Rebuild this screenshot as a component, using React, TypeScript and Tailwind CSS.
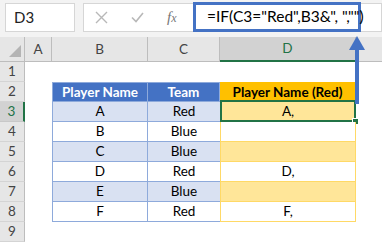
import React from "react";

const FONT = { fontFamily: "Lato, 'Liberation Sans', sans-serif" };

interface Row {
  n: number;
  player: string;
  team: string;
  red: string;
}

const rows: Row[] = [
  { n: 3, player: "A", team: "Red", red: "A," },
  { n: 4, player: "B", team: "Blue", red: "" },
  { n: 5, player: "C", team: "Blue", red: "" },
  { n: 6, player: "D", team: "Red", red: "D," },
  { n: 7, player: "E", team: "Blue", red: "" },
  { n: 8, player: "F", team: "Red", red: "F," },
];

function RowHead({ n, active }: { n: number; active?: boolean }) {
  return (
    <div
      className={
        active
          ? "flex items-center justify-center bg-[#d2d2d2] border-b border-[#c8c8c8] border-r-2 border-r-[#217346] text-[13.5px] text-[#217346]"
          : "flex items-center justify-center bg-[#e6e6e6] border-b border-[#d4d4d4] border-r border-r-[#bdbdbd] text-[13.5px] text-[#444]"
      }
    >
      {n}
    </div>
  );
}

export default function App() {
  return (
    <div className="relative w-[382px] h-[242px] overflow-hidden bg-white text-black" style={FONT}>
      {/* formula bar */}
      <div className="flex items-start h-[37px] bg-[#f3f3f3] pt-[3px] pl-[5px]">
        <div className="w-[70px] h-[29px] bg-white border border-[#d6d6d6] flex items-center pl-[8px] text-[15px] text-[#222]">
          D3
        </div>
        <div className="ml-[8px] flex-1 h-[29px] bg-white border border-[#d6d6d6] flex items-center">
          <div className="w-[109px] flex items-center pl-[11px] gap-[23px]">
            <svg width="13" height="13" viewBox="0 0 13 13">
              <path d="M1 1 L12 12 M12 1 L1 12" stroke="#b8b8b8" strokeWidth="1.4" fill="none" />
            </svg>
            <svg width="13" height="11" viewBox="0 0 13 11">
              <path d="M1 5.5 L5 9.5 L12 1" stroke="#b8b8b8" strokeWidth="1.6" fill="none" />
            </svg>
            <span className="italic text-[15px] text-[#777]" style={{ fontFamily: "'Liberation Serif', serif" }}>
              f<span className="text-[12px]">x</span>
            </span>
          </div>
          <div className="-mt-[1px] h-[30px] w-[168px] border-[3px] border-[#4472c4] flex items-center pl-[11px] text-[15.5px] text-black whitespace-nowrap">
            =IF(C3="Red",B3&amp;", ","")
          </div>
        </div>
      </div>

      {/* grid */}
      <div className="grid grid-cols-[25px_27px_96px_72px_136px_26px] grid-rows-[25px_repeat(9,20px)]">
        {/* column headers */}
        <div className="relative bg-[#e6e6e6] border-r border-b border-[#bdbdbd]">
          <div className="absolute right-[3px] bottom-[4px] w-0 h-0 border-l-[12px] border-l-transparent border-b-[12px] border-b-[#b4b4b4]" />
        </div>
        <div className="flex items-center justify-center bg-[#e6e6e6] border-r border-b border-[#bdbdbd] text-[13.5px] text-[#444]">A</div>
        <div className="flex items-center justify-center bg-[#e6e6e6] border-r border-b border-[#bdbdbd] text-[13.5px] text-[#444]">B</div>
        <div className="flex items-center justify-center bg-[#e6e6e6] border-r border-b border-[#bdbdbd] text-[13.5px] text-[#444]">C</div>
        <div className="flex items-center justify-center bg-[#d2d2d2] border-r border-[#bdbdbd] border-b-2 border-b-[#217346] text-[13.5px] text-[#217346]">D</div>
        <div className="bg-[#e6e6e6] border-b border-[#bdbdbd]" />

        {/* row 1 */}
        <RowHead n={1} />
        <div className="col-span-5" />

        {/* row 2 - table header */}
        <RowHead n={2} />
        <div />
        <div className="flex items-center justify-center bg-[#4472c4] border border-[#8eaadb] text-white font-bold text-[13.5px]">Player Name</div>
        <div className="flex items-center justify-center bg-[#4472c4] border-y border-r border-[#8eaadb] text-white font-bold text-[13.5px]">Team</div>
        <div className="flex items-center justify-center bg-[#ffc000] border-y border-r border-[#ffc000] text-black font-bold text-[13.5px]">Player Name (Red)</div>
        <div />

        {rows.map((r, i) => {
          const band = i % 2 === 0;
          return (
            <React.Fragment key={r.n}>
              <RowHead n={r.n} active={r.n === 3} />
              <div />
              <div className={`flex items-center justify-center border-x border-b border-[#8eaadb] text-[13.5px] ${band ? "bg-[#d9e1f2]" : "bg-white"}`}>
                {r.player}
              </div>
              <div className={`flex items-center justify-center border-b border-[#8eaadb] text-[13.5px] ${band ? "bg-[#d9e1f2]" : "bg-white"}`}>
                {r.team}
              </div>
              <div className={`relative flex items-center justify-center border-x border-b border-[#ffd966] text-[13.5px] ${band ? "bg-[#ffe699]" : "bg-white"}`}>
                {r.red}
                {r.n === 3 && (
                  <>
                    <div className="absolute -left-px -top-[2px] -right-px -bottom-px border-2 border-[#217346]" />
                    <div className="absolute -right-[4px] -bottom-[4px] w-[7px] h-[7px] bg-[#217346] border border-white" />
                  </>
                )}
              </div>
              <div />
            </React.Fragment>
          );
        })}

        {/* row 9 */}
        <RowHead n={9} />
        <div className="col-span-5" />
      </div>

      {/* annotation arrow */}
      <svg className="absolute left-[349px] top-[35px]" width="16" height="70" viewBox="0 0 16 70">
        <polygon points="0,15 8,1 16,15" fill="#4472c4" />
        <rect x="6" y="14" width="4" height="55" fill="#4472c4" />
      </svg>
    </div>
  );
}
